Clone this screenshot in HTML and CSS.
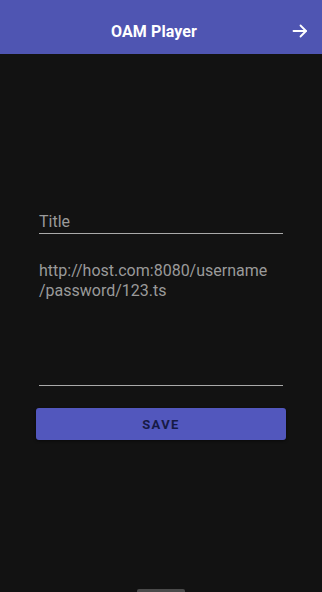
FILE: index.html
```html
<!DOCTYPE html>
<html lang="en">
<head>
<meta charset="utf-8">
<title>OAM Player</title>
<link rel="stylesheet" href="styles.css">
</head>
<body>
<div class="screen">
  <header class="appbar">
    <h1 class="appbar-title">OAM Player</h1>
    <button class="appbar-action" aria-label="Next">
      <svg width="16" height="16" viewBox="0 0 16 16" fill="none" stroke="#ffffff" stroke-width="1.8" stroke-linecap="round" stroke-linejoin="round">
        <path d="M1.5 8 H14"/>
        <path d="M8.5 2.5 L14 8 L8.5 13.5"/>
      </svg>
    </button>
  </header>
  <main class="form">
    <div class="field field-title">
      <span class="placeholder">Title</span>
    </div>
    <div class="field field-url">
      <span class="placeholder">http://host.com:8080/username<br>/password/123.ts</span>
    </div>
    <button class="save-btn">SAVE</button>
  </main>
  <div class="home-indicator"></div>
</div>
</body>
</html>
```
FILE: styles.css
```css
* { box-sizing: border-box; }
html, body {
  margin: 0;
  padding: 0;
  background: #121212;
}
body {
  font-family: Roboto, "Noto Sans", "Liberation Sans", sans-serif;
}
.screen {
  display: flex;
  flex-direction: column;
  min-height: 592px;
  width: 322px;
}
.appbar {
  height: 54px;
  background: #4f55b2;
  display: flex;
  align-items: center;
  justify-content: center;
  position: relative;
  flex-shrink: 0;
  padding: 8px 14px 0 0;
}
.appbar-title {
  margin: 0;
  color: #ffffff;
  font-size: 16px;
  font-weight: 700;
  letter-spacing: 0.1px;
}
.appbar-action {
  position: absolute;
  right: 8px;
  top: 17px;
  width: 28px;
  height: 28px;
  padding: 0;
  border: 0;
  background: transparent;
  display: flex;
  align-items: center;
  justify-content: center;
}
.form {
  display: flex;
  flex-direction: column;
  padding: 158px 36px 0 36px;
}
.field {
  margin: 0 3px;
  border-bottom: 1.5px solid #a9a9a9;
}
.placeholder {
  display: block;
  color: #9a9a9a;
  font-size: 16px;
  line-height: 20px;
}
.field-title {
  padding-bottom: 1px;
}
.field-url {
  margin-top: 27px;
  height: 125px;
}
.save-btn {
  margin-top: 22px;
  height: 32px;
  border: 0;
  border-radius: 3px;
  background: #5257bd;
  color: #161a45;
  font-family: Roboto, "Noto Sans", "Liberation Sans", sans-serif;
  font-size: 13px;
  font-weight: 700;
  letter-spacing: 1.4px;
  padding-top: 2px;
  box-shadow: 0 1px 3px rgba(0,0,0,0.5);
}
.home-indicator {
  margin-top: auto;
  align-self: center;
  width: 48px;
  height: 3px;
  background: #4a4a4a;
  border-radius: 2px 2px 0 0;
}
```
